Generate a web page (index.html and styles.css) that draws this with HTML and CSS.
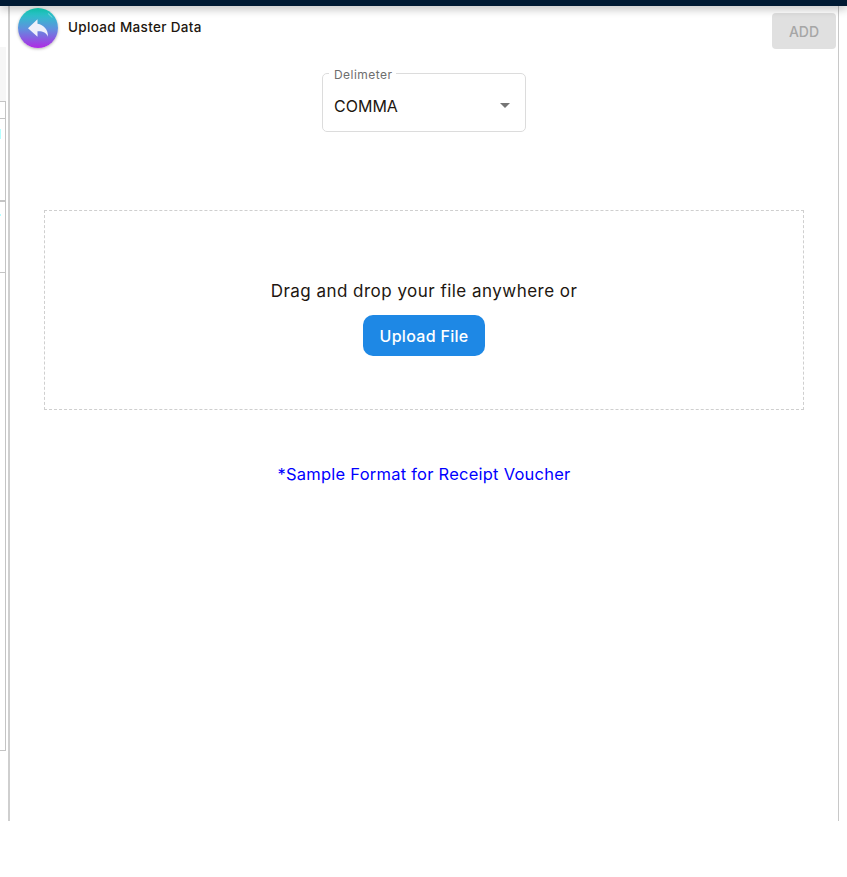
FILE: index.html
```html
<!DOCTYPE html>
<html lang="en">
<head>
<meta charset="utf-8">
<title>Upload Master Data</title>
<link rel="stylesheet" href="styles.css">
</head>
<body>
<div class="topbar"></div>
<div class="shell">
  <aside class="side">
    <div class="side-grey"></div>
    <div class="side-row r1"></div>
    <div class="side-row r2"><span class="tick t1"></span></div>
    <div class="side-row r3"><span class="tick t2"></span></div>
    <div class="side-row r4"></div>
  </aside>
  <main class="panel">
    <header class="head">
      <button class="back" aria-label="Back">
        <svg class="back-icon" viewBox="0 0 40 40" width="40" height="40">
          <path fill="none" stroke="#ffffff" stroke-opacity=".55" stroke-width=".8" d="M30 5.500a18 18 0 0 1 4 4"/>
          <path fill="#eef0fb" d="M19.500 15.800v-4.500l-9.500 9 9.500 8.400v-5.400c5.500-.2 8.600 1.200 10.500 5.400.2-7-4.300-11.900-10.500-12.900z"/>
        </svg>
      </button>
      <h1 class="title">Upload Master Data</h1>
      <button class="add" disabled>ADD</button>
    </header>
    <div class="field-wrap">
      <fieldset class="field">
        <legend class="legend">Delimeter</legend>
        <span class="value">COMMA</span>
        <span class="caret"></span>
      </fieldset>
    </div>
    <section class="drop">
      <p class="drop-text">Drag and drop your file anywhere or</p>
      <button class="upload">Upload File</button>
    </section>
    <a class="sample" href="#">*Sample Format for Receipt Voucher</a>
  </main>
</div>
</body>
</html>
```
FILE: styles.css
```css
* { box-sizing: border-box; }
html, body { margin: 0; padding: 0; background: #fff; }
body {
  width: 847px;
  height: 877px;
  overflow: hidden;
  font-family: "Inter", "Noto Sans", sans-serif;
  color: #21160f;
}
.topbar {
  height: 6px;
  background: #001a33;
  box-shadow: 0 2px 10px rgba(0, 0, 0, .35);
  position: relative;
}
.shell { display: flex; height: 815px; }
.side { width: 8px; flex: none; display: flex; flex-direction: column; }
.side-grey { height: 54px; width: 6px; margin-top: 41px; background: #f6f6f6; }
.side-row { border: 1px solid #c4c4c4; border-left: 0; width: 6px; position: relative; }
.r1 { height: 17px; border-bottom: 0; }
.r2 { height: 82px; border-bottom: 0; }
.r3 { height: 72px; border-top-width: 2px; border-bottom: 0; }
.r4 { height: 479px; }
.tick { position: absolute; left: 0; background: #b4ffff; width: 1px; }
.t1 { top: 10px; height: 10px; }
.t2 { top: 12px; height: 2px; }
.panel {
  width: 831px;
  flex: none;
  border-left: 2px solid #cfcfcf;
  border-right: 1px solid #c8c8c8;
  display: flex;
  flex-direction: column;
  align-items: center;
}
.head { align-self: stretch; display: flex; align-items: flex-start; padding: 2px 2px 0 8px; height: 67px; }
.back {
  width: 40px; height: 40px; border: 0; padding: 0; border-radius: 50%; flex: none;
  background: linear-gradient(#12dcc0, #5f90de 52%, #b02ae4);
  box-shadow: 0 1px 3px rgba(0, 0, 0, .3);
}
.back-icon { display: block; }
.title { margin: 9px 0 0 10px; font-size: 13.500px; font-weight: 500; line-height: 20px; flex: 1; letter-spacing: .33px; }
.add {
  width: 64px; height: 36px; margin-top: 5px; border: 0; border-radius: 4px;
  background: #e0e0e0; color: #a6a6a6; font: 500 14px "Inter", sans-serif;
}
.field-wrap { width: 204px; height: 137px; }
.field {
  margin: 0; padding: 0 11px; height: 68px; width: 204px; position: relative; top: -9px;
  border: 1px solid #dcdcdc; border-radius: 5px;
}
.legend { padding: 4px 4px 0 5px; margin-left: -5px; font-size: 12px; line-height: 14px; color: #6e6e6e; letter-spacing: .45px; }
.value { display: block; margin-top: 12px; font-size: 16px; line-height: 24px; }
.caret {
  position: absolute; right: 15px; top: 21px; width: 0; height: 0;
  border: 5px solid transparent; border-top-color: #757575; border-bottom: 0;
}
.drop {
  width: 760px; height: 200px; flex: none;
  border: 1px dashed #cfcfcf;
  display: flex; flex-direction: column; align-items: center; padding-top: 68px;
}
.drop-text { margin: 0; font-size: 17px; line-height: 24px; letter-spacing: .47px; }
.upload {
  margin-top: 12px; width: 122px; height: 41px; border: 0; border-radius: 10px;
  background: #1e88e5; color: #fff; font: 500 16px "Inter", sans-serif; letter-spacing: .3px;
}
.sample { margin-top: 52px; font-size: 16.500px; line-height: 24px; color: #0000ff; text-decoration: none; letter-spacing: .24px; }
```
